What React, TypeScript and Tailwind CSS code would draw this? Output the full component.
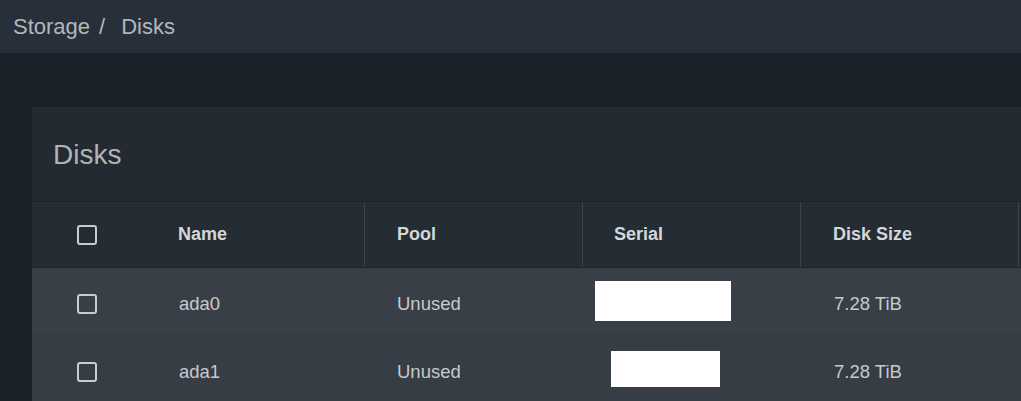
const font = { fontFamily: '"Liberation Sans", Arial, sans-serif' };

const disks = [
  { name: "ada0", pool: "Unused", serialW: "w-[136px] h-[40px] ml-[12px]", size: "7.28 TiB" },
  { name: "ada1", pool: "Unused", serialW: "w-[109px] h-[36px] ml-[28px]", size: "7.28 TiB" },
];

function Checkbox() {
  return <div className="w-[20px] h-[20px] rounded-[3px] border-2 border-[#c9cccf]" />;
}

export default function App() {
  return (
    <div className="w-[1021px] h-[401px] overflow-hidden bg-[#1b2129]" style={font}>
      {/* Breadcrumb bar */}
      <div className="h-[53px] bg-[#27303a] flex items-center pl-[13px] text-[22px] text-[#b3b7bb]">
        <span>Storage</span>
        <span className="ml-[9px] mr-[16px]">/</span>
        <span>Disks</span>
      </div>

      <div className="pl-[32px] pt-[54px]">
        <div className="w-[1100px] bg-[#232a31]">
          <div className="h-[95px] flex items-center pl-[21px] border-b border-[#1c2228]">
            <h1 className="text-[28px] text-[#b0b4b8] mt-[2px]">Disks</h1>
          </div>

          {/* Header row */}
          <div className="h-[66px] flex items-center bg-[#242c34] text-[18px] font-bold text-[#d4d7da] border-b border-[#1e252b]">
            <div className="w-[113px] pl-[45px] flex items-center">
              <Checkbox />
            </div>
            <div className="w-[220px] pl-[33px] h-full flex items-center border-r border-[#3b434b]">Name</div>
            <div className="w-[218px] pl-[32px] h-full flex items-center border-r border-[#3b434b]">Pool</div>
            <div className="w-[218px] pl-[31px] h-full flex items-center border-r border-[#3b434b]">Serial</div>
            <div className="w-[218px] pl-[32px] h-full flex items-center border-r border-[#3b434b]">Disk Size</div>
          </div>

          {disks.map((d, i) => (
            <div
              key={d.name}
              className={
                "h-[67px] pt-[6px] flex items-center text-[18.5px] text-[#c7cacd] " +
                (i === 0 ? "bg-[#383f46] border-b border-[#353c43]" : "bg-[#363d44]")
              }
            >
              <div className="w-[113px] pl-[45px] flex items-center">
                <Checkbox />
              </div>
              <div className="w-[220px] pl-[34px]">{d.name}</div>
              <div className="w-[218px] pl-[32px]">{d.pool}</div>
              <div className="w-[218px]">
                <div className={"bg-white mb-[6px] " + d.serialW} />
              </div>
              <div className="w-[218px] pl-[33px]">{d.size}</div>
            </div>
          ))}
        </div>
      </div>
    </div>
  );
}
